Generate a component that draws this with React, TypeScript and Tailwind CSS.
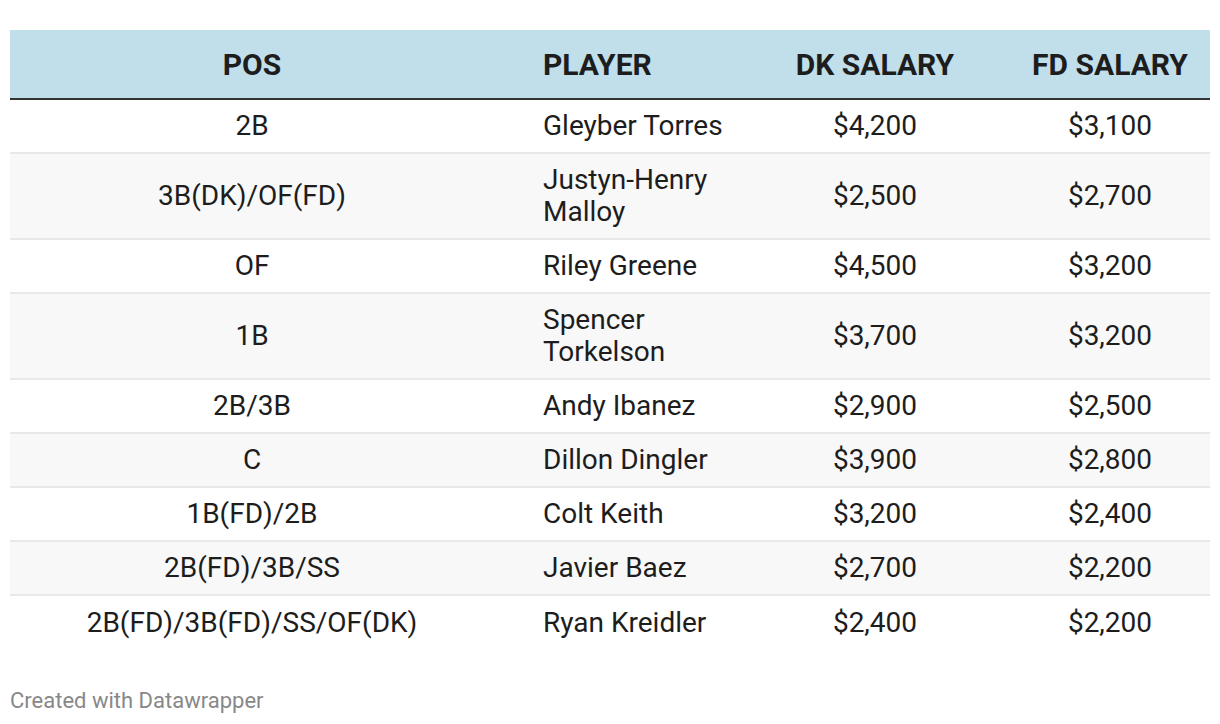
const rows = [
  { pos: '2B', player: 'Gleyber Torres', dk: '$4,200', fd: '$3,100' },
  { pos: '3B(DK)/OF(FD)', player: 'Justyn-Henry Malloy', dk: '$2,500', fd: '$2,700' },
  { pos: 'OF', player: 'Riley Greene', dk: '$4,500', fd: '$3,200' },
  { pos: '1B', player: 'Spencer Torkelson', dk: '$3,700', fd: '$3,200' },
  { pos: '2B/3B', player: 'Andy Ibanez', dk: '$2,900', fd: '$2,500' },
  { pos: 'C', player: 'Dillon Dingler', dk: '$3,900', fd: '$2,800' },
  { pos: '1B(FD)/2B', player: 'Colt Keith', dk: '$3,200', fd: '$2,400' },
  { pos: '2B(FD)/3B/SS', player: 'Javier Baez', dk: '$2,700', fd: '$2,200' },
  { pos: '2B(FD)/3B(FD)/SS/OF(DK)', player: 'Ryan Kreidler', dk: '$2,400', fd: '$2,200' },
];

export default function App() {
  return (
    <div className="w-[1220px] h-[724px] bg-white px-[10px] pt-[30px] text-[#1d1d1d] font-['Roboto',sans-serif]">
      <div className="flex h-[70px] items-center bg-[#c1deeb] border-b-2 border-[#333] text-[30px] font-bold">
        <div className="w-[484px] text-center">POS</div>
        <div className="w-[246px] pl-[49px]">PLAYER</div>
        <div className="w-[270px] text-center">DK SALARY</div>
        <div className="w-[200px] text-center">FD SALARY</div>
      </div>
      {rows.map((r, i) => (
        <div
          key={r.player}
          className={`flex items-center py-[10px] min-h-[54px] text-[28px] leading-[32px] ${i < rows.length - 1 ? 'border-b-2 border-[#e8e8e8]' : ''} ${i % 2 === 1 ? 'bg-[#f8f8f8]' : 'bg-white'}`}
        >
          <div className="w-[484px] text-center">{r.pos}</div>
          <div className="w-[246px] pl-[49px]">{r.player}</div>
          <div className="w-[270px] text-center">{r.dk}</div>
          <div className="w-[200px] text-center">{r.fd}</div>
        </div>
      ))}
      <div className="mt-[34px] text-[22px] text-[#888]">Created with Datawrapper</div>
    </div>
  );
}
